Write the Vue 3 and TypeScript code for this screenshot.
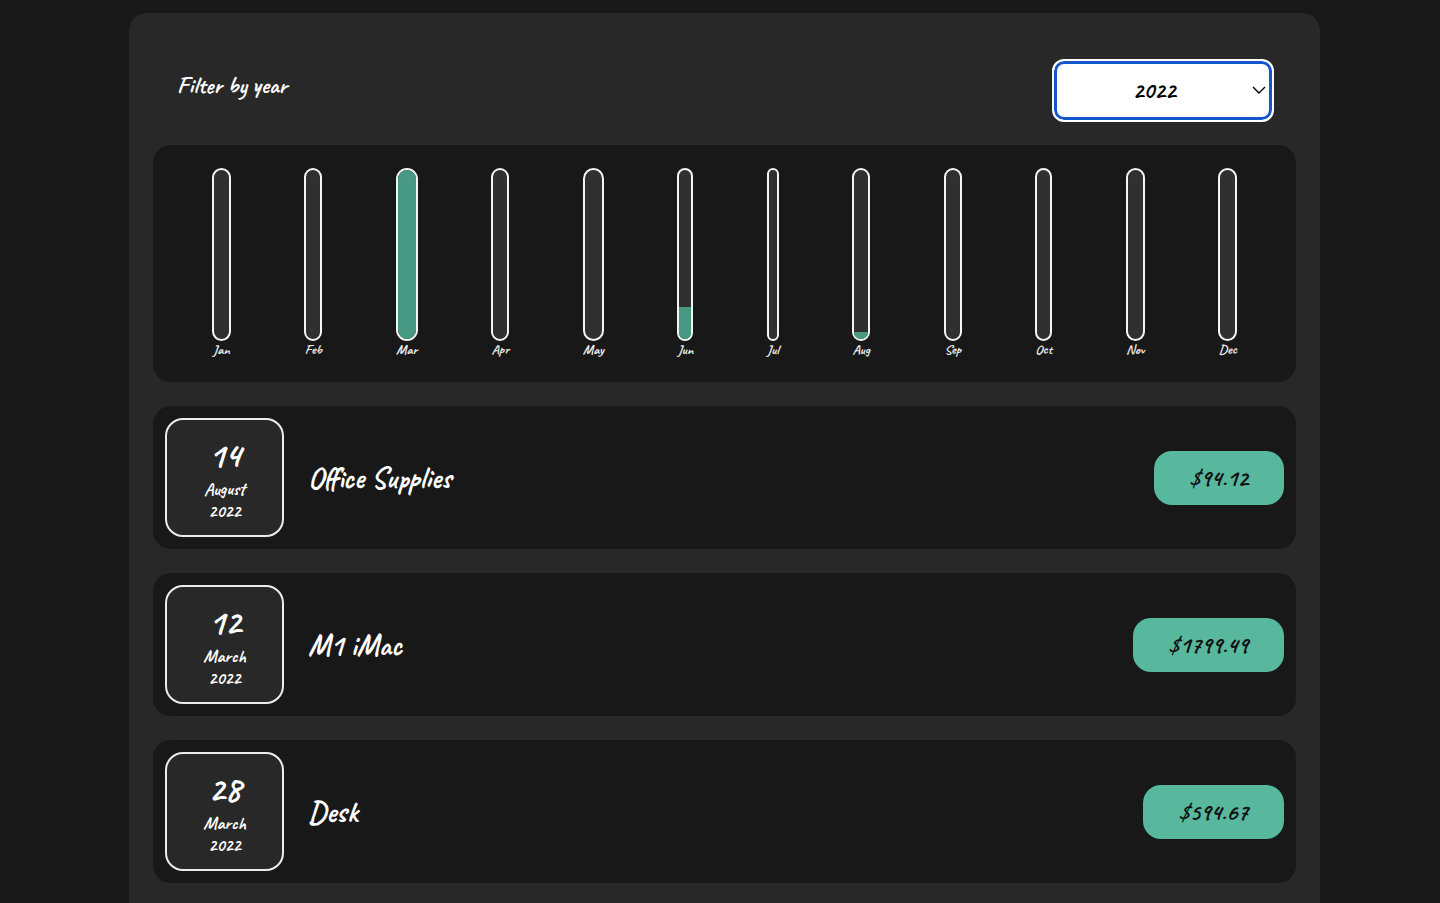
<script setup lang="ts">
import { computed, ref } from 'vue'

interface Expense {
  title: string
  amount: number
  day: number
  month: number
  year: number
}

const years = ['2022', '2021', '2020', '2019']
const year = ref('2022')

const expenses: Expense[] = [
  { title: 'Office Supplies', amount: 94.12, day: 14, month: 7, year: 2022 },
  { title: 'M1 iMac', amount: 1799.49, day: 12, month: 2, year: 2022 },
  { title: 'Desk', amount: 594.67, day: 28, month: 2, year: 2022 },
]

const monthNames = [
  'January', 'February', 'March', 'April', 'May', 'June',
  'July', 'August', 'September', 'October', 'November', 'December',
]

const bars = [
  { label: 'Jan', width: 19, fill: 0 },
  { label: 'Feb', width: 18, fill: 0 },
  { label: 'Mar', width: 22, fill: 100 },
  { label: 'Apr', width: 18, fill: 0 },
  { label: 'May', width: 21, fill: 0 },
  { label: 'Jun', width: 16, fill: 19 },
  { label: 'Jul', width: 12, fill: 0 },
  { label: 'Aug', width: 18, fill: 4 },
  { label: 'Sep', width: 18, fill: 0 },
  { label: 'Oct', width: 17, fill: 0 },
  { label: 'Nov', width: 19, fill: 0 },
  { label: 'Dec', width: 19, fill: 0 },
]

const shown = computed(() => expenses.filter((e) => String(e.year) === year.value))
</script>

<template>
  <main class="page">
    <section class="card">
      <header class="filter">
        <label class="filter-label" for="year">Filter by year</label>
        <div class="select-wrap">
          <select id="year" v-model="year" class="select">
            <option v-for="y in years" :key="y" :value="y">{{ y }}</option>
          </select>
          <svg class="chevron" viewBox="0 0 14 8" aria-hidden="true">
            <path d="M1 1 L7 7 L13 1" />
          </svg>
        </div>
      </header>

      <div class="chart">
        <div v-for="bar in bars" :key="bar.label" class="month" :style="{ width: bar.width + 'px' }">
          <div class="bar">
            <div class="fill" :style="{ height: bar.fill + '%' }"></div>
          </div>
          <span class="month-label">{{ bar.label }}</span>
        </div>
      </div>

      <ul class="list">
        <li v-for="item in shown" :key="item.title" class="expense">
          <div class="date">
            <span class="day">{{ item.day }}</span>
            <span class="date-line">{{ monthNames[item.month] }}</span>
            <span class="date-line">{{ item.year }}</span>
          </div>
          <h2 class="title">{{ item.title }}</h2>
          <div class="price">${{ item.amount }}</div>
        </li>
      </ul>
    </section>
  </main>
</template>

<style>
body {
  margin: 0;
  background: #181818;
}
</style>

<style scoped>
.page {
  box-sizing: border-box;
  min-height: 100vh;
  display: flex;
  padding: 13px 120px 0 129px;
  background: #181818;
  color: #fff;
  font-family: Caveat, cursive;
  font-weight: 700;
}

.card {
  box-sizing: border-box;
  flex: 1;
  min-width: 0;
  padding: 24px 24px 0;
  border-radius: 18px 18px 0 0;
  background: #282828;
}

.filter {
  display: flex;
  justify-content: space-between;
  align-items: flex-start;
  padding: 22px 22px 23px 24px;
}

.filter-label {
  font-size: 24px;
  line-height: 52px;
}

.select-wrap {
  position: relative;
}

.select {
  display: block;
  box-sizing: border-box;
  appearance: none;
  width: 222px;
  height: 63px;
  padding: 0 18px 2px 0;
  border: 2px solid #fff;
  border-radius: 12px;
  outline: none;
  box-shadow: inset 0 0 0 3px #1456cc;
  background: #fff;
  color: #000;
  font: inherit;
  font-size: 24px;
  text-align: center;
  text-align-last: center;
}

.chevron {
  position: absolute;
  top: 27px;
  right: 8px;
  width: 14px;
  height: 8px;
  fill: none;
  stroke: #000;
  stroke-width: 1.4;
  pointer-events: none;
}

.chart {
  display: flex;
  justify-content: space-around;
  padding: 23px 22px;
  border-radius: 18px;
  background: #181818;
}

.month {
  display: flex;
  flex-direction: column;
  align-items: center;
}

.bar {
  box-sizing: border-box;
  display: flex;
  flex-direction: column;
  justify-content: flex-end;
  width: 100%;
  height: 173px;
  overflow: hidden;
  border: 2px solid #f4f4f4;
  border-radius: 12px;
  background: #303030;
}

.fill {
  background: #479983;
}

.month-label {
  color: #e8e8e8;
  font-size: 14px;
  line-height: 18px;
}

.list {
  display: flex;
  flex-direction: column;
  gap: 24px;
  margin: 24px 0 0;
  padding: 0;
  list-style: none;
}

.expense {
  display: flex;
  align-items: center;
  padding: 12px;
  border-radius: 18px;
  background: #181818;
}

.date {
  box-sizing: border-box;
  display: flex;
  flex-direction: column;
  align-items: center;
  width: 119px;
  height: 119px;
  padding-top: 13px;
  border: 2px solid #ececec;
  border-radius: 18px;
  background: #282828;
}

.day {
  font-size: 36px;
  line-height: 45px;
}

.date-line {
  font-size: 18px;
  line-height: 22px;
}

.title {
  flex: 1;
  margin: 0 0 0 24px;
  font-size: 30px;
  line-height: 32px;
}

.price {
  padding: 0 36px;
  border-radius: 18px;
  background: #57b89d;
  color: #111;
  font-size: 24px;
  line-height: 54px;
}
</style>
